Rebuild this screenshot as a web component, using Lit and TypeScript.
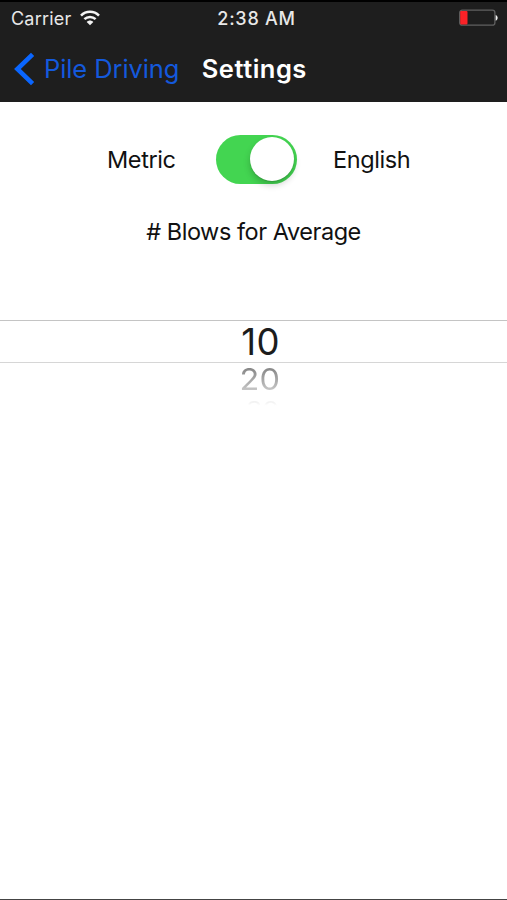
import { LitElement, html, css } from "lit";
import { customElement, property, state } from "lit/decorators.js";

@customElement("status-bar")
class StatusBar extends LitElement {
  static styles = css`
    :host { display: grid; grid-template-columns: 1fr auto 1fr; align-items: center; height: 32px; padding: 0 9px 0 11px; color: #e8e8e8; font-size: 18px; white-space: nowrap; }
    .left { display: flex; align-items: center; gap: 9px; }
    .carrier { letter-spacing: 0.2px; }
    .time { font-weight: 500; letter-spacing: 0.75px; padding-left: 4px; }
    .right { display: flex; justify-content: flex-end; }
    svg { display: block; }
  `;
  render() {
    return html`
      <div class="left">
        <span class="carrier">Carrier</span>
        <svg width="20" height="16" viewBox="0 0 20 16" fill="none" stroke="#f4f4f4" stroke-width="2.5">
          <path d="M1 5.6C6 .5 14 .5 19 5.6" />
          <path d="M4.4 9.2C7.5 6.1 12.5 6.1 15.6 9.2" />
          <path d="M10 15.2L6.7 12C8.5 10 11.5 10 13.3 12Z" fill="#f4f4f4" stroke="none" />
        </svg>
      </div>
      <span class="time">2:38 AM</span>
      <div class="right">
        <svg width="39" height="18" viewBox="0 0 39 18">
          <rect x=".7" y="1.2" width="35.2" height="15" rx="2.5" fill="none" stroke="#606060" stroke-width="1.3" />
          <rect x="1.2" y="2" width="7.3" height="13.6" rx="1" fill="#fb2227" />
          <path d="M36.7 5.9C39.3 6.7 39.3 11 36.7 11.8Z" fill="#f0f0f0" />
        </svg>
      </div>
    `;
  }
}

@customElement("nav-bar")
class NavBar extends LitElement {
  static styles = css`
    :host { display: flex; align-items: center; height: 69px; padding-left: 14px; font-size: 25.5px; white-space: nowrap; }
    svg { display: block; margin-right: 9px; }
    .back { display: flex; align-items: center; color: #1459dc; letter-spacing: -0.1px; }
    .title { margin-left: 22.5px; color: #fff; font-weight: 600; letter-spacing: 0.5px; }
  `;
  render() {
    return html`
      <div class="back">
        <svg width="21" height="34" viewBox="0 0 21 34" fill="none" stroke="#0a66ff" stroke-width="4.6">
          <path d="M18.6 2.3L3.4 17L18.6 31.7" />
        </svg>
        <span>Pile Driving</span>
      </div>
      <span class="title">Settings</span>
    `;
  }
}

@customElement("toggle-switch")
class ToggleSwitch extends LitElement {
  @property({ type: Boolean }) on = false;
  static styles = css`
    :host { display: block; }
    .track { box-sizing: border-box; display: flex; width: 81px; height: 49px; padding: 2.5px; border-radius: 25px; background: #d9d9d9; }
    .track.on { justify-content: flex-end; background: #43d551; }
    .knob { width: 44px; height: 44px; border-radius: 50%; background: #fff; box-shadow: 0 4px 7px rgba(0, 0, 0, 0.2), 0 1px 1px rgba(0, 0, 0, 0.12); }
  `;
  render() {
    return html`<div class="track ${this.on ? "on" : ""}"><div class="knob"></div></div>`;
  }
}

@customElement("wheel-picker")
class WheelPicker extends LitElement {
  @property({ attribute: false }) values: number[] = [];
  static styles = css`
    :host { display: block; height: 100px; text-align: center; font-size: 36.5px; }
    .row { padding-left: 14px; }
    .selected { box-sizing: border-box; height: 43px; line-height: 42px; border-top: 1px solid #c4c4c4; border-bottom: 1px solid #d6d6d6; color: #1c1c1c; letter-spacing: 0.4px; }
    .next { height: 32px; line-height: 32px; transform: scale(0.89, 0.81); color: transparent; background: linear-gradient(#888 10%, #c4c4c4 90%); -webkit-background-clip: text; background-clip: text; }
    .far { height: 28px; line-height: 28px; font-size: 20px; transform: scaleX(1.3); color: transparent; background: linear-gradient(#f2f2f2 26%, #fff 38%); -webkit-background-clip: text; background-clip: text; }
  `;
  render() {
    const kinds = ["selected", "next", "far"];
    return html`${this.values.map((v, i) => html`<div class="row ${kinds[i]}">${v}</div>`)}`;
  }
}

@customElement("app-root")
class AppRoot extends LitElement {
  @state() private english = true;
  static styles = css`
    :host { display: flex; flex-direction: column; box-sizing: border-box; height: 900px; background: #fff; border-bottom: 1px solid #444; font-family: Inter, sans-serif; color: #111; overflow: hidden; }
    header { box-sizing: border-box; height: 102px; background: #1e1e1e; border-top: 2px solid #000; }
    .units { display: flex; align-items: center; height: 49px; margin-top: 32.5px; padding-left: 107px; font-size: 23.5px; letter-spacing: -0.4px; white-space: nowrap; }
    .metric { width: 68px; }
    .switch { margin: 0 36.5px 0 40.5px; }
    .label { margin-top: 34px; height: 28px; line-height: 28px; text-align: center; font-size: 23.5px; letter-spacing: -0.45px; white-space: nowrap; }
    .picker { margin-top: 74.5px; }
  `;
  render() {
    return html`
      <header>
        <status-bar></status-bar>
        <nav-bar></nav-bar>
      </header>
      <div class="units">
        <span class="metric">Metric</span>
        <toggle-switch class="switch" ?on=${this.english}></toggle-switch>
        <span>English</span>
      </div>
      <div class="label"># Blows for Average</div>
      <wheel-picker class="picker" .values=${[10, 20, 30]}></wheel-picker>
    `;
  }
}
